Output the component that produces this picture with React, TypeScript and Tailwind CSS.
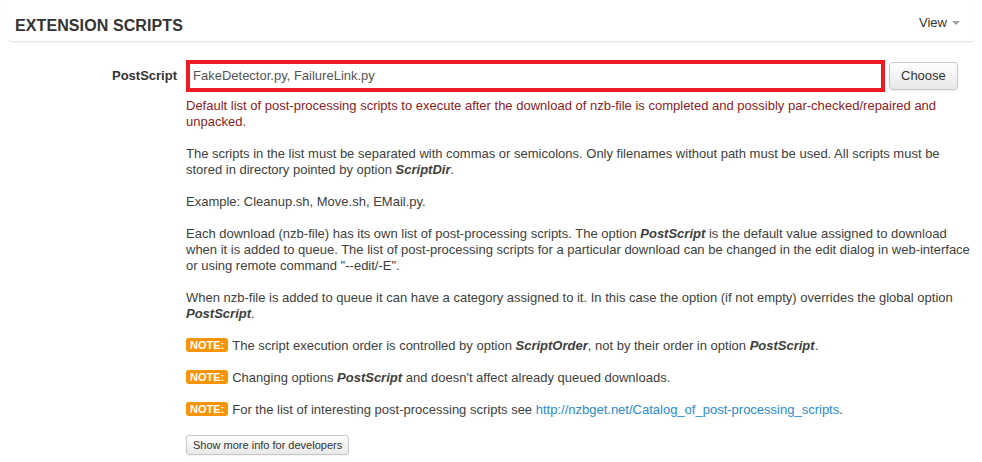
import React from 'react';

const Note = () => (
  <span className="inline-block bg-[#f89406] text-white font-bold text-[11px] leading-[14px] px-[4px] rounded-[3px] mr-[4px] align-[1px]">
    NOTE:
  </span>
);

export default function App() {
  return (
    <div className="w-[982px] h-[462px] bg-white text-[#404040] overflow-hidden" style={{ fontFamily: '"Liberation Sans", Arial, sans-serif' }}>
      {/* Section header */}
      <div className="mx-2 h-[42px] flex items-center justify-between border-b border-[#e8e8e8] rounded-b-[4px] shadow-[0_1px_1px_rgba(0,0,0,0.04)] pl-[7px] pr-[8px] pt-[10px]">
        <h2 className="text-[16px] font-bold text-[#333] tracking-[0.1px]">EXTENSION SCRIPTS</h2>
        <div className="flex items-center gap-[5px] text-[13px] text-[#333] mr-[6px] -mt-[5px]">
          <span>View</span>
          <span className="w-0 h-0 border-l-[4px] border-r-[4px] border-t-[4px] border-l-transparent border-r-transparent border-t-[#a0a0a0]" />
        </div>
      </div>

      {/* Option row */}
      <div className="flex pl-2 pt-[18px]">
        <label className="w-[169px] text-right font-bold text-[13px] text-[#333] pt-[8px] leading-[16px]">PostScript</label>
        <div className="ml-[9px] w-[789px]">
          <div className="flex items-center">
            <div className="w-[699px] h-[32px] shrink-0 border-[4px] border-[#ed1c24] flex items-center pl-[3px] text-[13px] text-[#555]">
              FakeDetector.py, FailureLink.py
            </div>
            <button className="ml-[4px] h-[28px] px-[11px] text-[13px] text-[#333] border border-[#c8c8c8] rounded-[4px] bg-gradient-to-b from-white to-[#e8e8e8] shadow-[0_1px_2px_rgba(0,0,0,0.08)]">
              Choose
            </button>
          </div>

          <div className="mt-[6px] text-[13px] leading-[16px]">
            <p className="text-[#8a1c24]">
              Default list of post-processing scripts to execute after the download of nzb-file is completed and possibly par-checked/repaired and unpacked.
            </p>
            <p className="mt-[16px]">
              The scripts in the list must be separated with commas or semicolons. Only filenames without path must be used. All scripts must be stored in directory pointed by option <b><i>ScriptDir</i></b>.
            </p>
            <p className="mt-[16px]">Example: Cleanup.sh, Move.sh, EMail.py.</p>
            <p className="mt-[16px]">
              Each download (nzb-file) has its own list of post-processing scripts. The option <b><i>PostScript</i></b> is the default value assigned to download when it is added to queue. The list of post-processing scripts for a particular download can be changed in the edit dialog in web-interface or using remote command "--edit/-E".
            </p>
            <p className="mt-[16px]">
              When nzb-file is added to queue it can have a category assigned to it. In this case the option (if not empty) overrides the global option <b><i>PostScript</i></b>.
            </p>
            <p className="mt-[16px]">
              <Note />The script execution order is controlled by option <b><i>ScriptOrder</i></b>, not by their order in option <b><i>PostScript</i></b>.
            </p>
            <p className="mt-[16px]">
              <Note />Changing options <b><i>PostScript</i></b> and doesn't affect already queued downloads.
            </p>
            <p className="mt-[16px]">
              <Note />For the list of interesting post-processing scripts see{' '}
              <a className="text-[#2a8bd2]" href="#">http://nzbget.net/Catalog_of_post-processing_scripts</a>.
            </p>
            <button className="mt-[17px] h-[20px] px-[6px] text-[11px] text-[#333] border border-[#c8c8c8] rounded-[3px] bg-gradient-to-b from-white to-[#e8e8e8] shadow-[0_1px_2px_rgba(0,0,0,0.06)]">
              Show more info for developers
            </button>
          </div>
        </div>
      </div>
    </div>
  );
}
